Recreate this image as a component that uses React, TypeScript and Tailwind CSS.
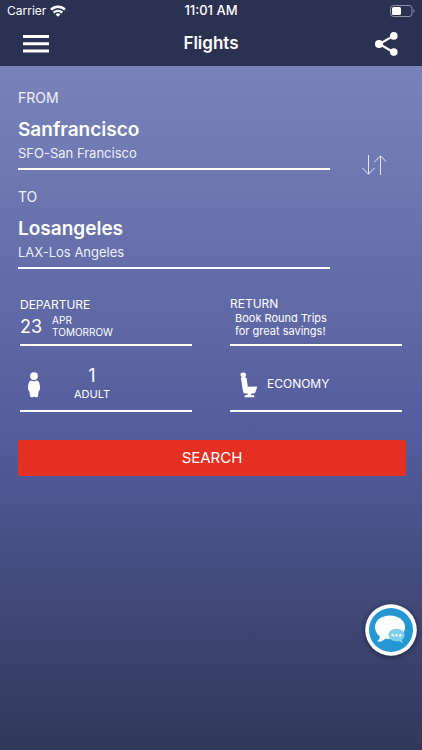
import type { ReactNode } from 'react'

interface AirportFieldProps {
  label: string
  city: string
  airport: string
}

function AirportField({ label, city, airport }: AirportFieldProps) {
  return (
    <button type="button" className="block w-full border-b-2 border-white pb-1.5 text-left">
      <span className="block text-sm leading-5 text-[#eef0fb]">{label}</span>
      <span className="mt-2 block text-[19px] leading-7 font-semibold">{city}</span>
      <span className="block text-[13px] leading-[18px] text-[#eef0fb]">{airport}</span>
    </button>
  )
}

interface OptionFieldProps {
  children: ReactNode
  className?: string
}

function OptionField({ children, className = '' }: OptionFieldProps) {
  return (
    <button type="button" className={`flex w-full border-b-2 border-white text-left ${className}`}>
      {children}
    </button>
  )
}

function StatusBar() {
  return (
    <div className="grid h-[22px] grid-cols-3 items-center px-[7px] text-xs">
      <div className="flex items-center gap-1">
        <span>Carrier</span>
        <svg className="h-3 w-4" viewBox="0 0 16 12" fill="none" stroke="currentColor" strokeWidth="2.4">
          <path d="M1 4.6a10 10 0 0 1 14 0" />
          <path d="M3.7 7.6a6.2 6.2 0 0 1 8.6 0" />
          <path d="M8 11.8 5.6 9.4a3.4 3.4 0 0 1 4.8 0z" fill="currentColor" stroke="none" />
        </svg>
      </div>
      <span className="text-center text-[13px] font-medium">11:01 AM</span>
      <svg className="h-3 w-[25px] justify-self-end" viewBox="0 0 25 12" fill="none">
        <rect x="0.5" y="0.5" width="21.5" height="11" rx="3" stroke="#8f93a8" />
        <rect x="2" y="2" width="9" height="8" rx="1.5" fill="white" />
        <path d="M23.5 4v4c1.4-.6 1.4-3.4 0-4z" fill="#8f93a8" />
      </svg>
    </div>
  )
}

function NavBar() {
  return (
    <div className="flex h-11 items-center justify-between px-[23px] pb-px">
      <button type="button" aria-label="Menu">
        <svg className="h-[18px] w-[26px]" viewBox="0 0 26 18" fill="currentColor">
          <path d="M0 0h26v3H0zM0 7.3h26v3H0zM0 14.6h26v3H0z" />
        </svg>
      </button>
      <h1 className="text-[17px] font-semibold">Flights</h1>
      <button type="button" aria-label="Share">
        <svg className="h-6 w-[26px]" viewBox="0 0 26 24" fill="currentColor">
          <path d="M20.8 3.6 6.5 12l14.3 8.5" fill="none" stroke="currentColor" strokeWidth="2.2" />
          <circle cx="6" cy="12" r="4" />
          <circle cx="20.8" cy="3.9" r="3.8" />
          <circle cx="20.8" cy="20.1" r="3.8" />
        </svg>
      </button>
    </div>
  )
}

function PersonIcon() {
  return (
    <svg className="h-[26px] w-3 shrink-0" viewBox="0 0 12 26" fill="currentColor">
      <circle cx="6" cy="4.1" r="3.9" />
      <path d="M3 8.6q3 1.4 6 0C11.2 9.2 12 12 12 16c-.1 1.8-.5 2.7-1.3 3.2l-.9 5.2q-.2.8-1 .8H6.9L6 24.2l-.9 1H3.2q-.8 0-1-.8l-.9-5.2C.5 18.7.1 17.8 0 16 0 12 .8 9.2 3 8.6z" />
    </svg>
  )
}

function SeatIcon() {
  return (
    <svg className="h-[26px] w-[17px] shrink-0" viewBox="0 0 17 26" fill="currentColor">
      <path d="M3.6.5C1.2.3.3 1.5.5 3c.1 1 .6 1.6 1.4 1.9h2.9c1-.4 1.3-1.2 1.2-2.3C5.9 1.3 4.9.6 3.6.5z" />
      <path d="M.9 5.7c1.9-1.1 4.9-.8 5.7.6l1.2 8.4 8.8-.1c.4.1.5.4.4.8l-1.5 4.7c-.3.9-.8 1.3-1.8 1.3H5.3c-1.4 0-2-.5-2.3-1.9z" />
      <path d="M7.7 20.8h3.4v2.1h2.2q1.2.4 1.2 2.3H4.4q0-1.900 1.200-2.300h2.100z" />
    </svg>
  )
}

function SwapIcon() {
  return (
    <svg className="h-5 w-6" viewBox="0 0 24 20" fill="none" stroke="#e3e6f7" strokeWidth="1">
      <path d="M6.5 0v19M.5 13l6 6.2 6-6.2" />
      <path d="M18.5 20V1M12.5 7l6-6.2 6 6.2" />
    </svg>
  )
}

function ChatButton() {
  return (
    <button
      type="button"
      aria-label="Chat"
      className="fixed right-[5px] bottom-[94px] size-[52px] rounded-full shadow-[0_1px_5px_rgba(20,15,30,0.6)]"
    >
      <svg className="size-full" viewBox="0 0 52 52">
        <circle cx="26" cy="26" r="25.8" fill="white" />
        <circle cx="26" cy="26" r="22" fill="#2598d3" />
        <path
          d="M25 11.5c8.5 0 15 5 15 11.7S33.5 35 25 35c-1.6 0-3-.1-4.5-.5-2 2.3-4.7 3.4-8.4 3 1.7-1.4 2.6-3.2 2.8-5.3C11.7 30 10 26.8 10 23.2 10 16.5 16.5 11.5 25 11.5z"
          fill="white"
        />
        <path
          d="M31.5 24.8c4.6 0 8.1 2.8 8.1 6.3 0 1.8-.9 3.5-2.5 4.6.1 1.2.6 2.2 1.5 3-2 .1-3.5-.5-4.6-1.7-.8.2-1.6.3-2.5.3-4.6 0-8.1-2.7-8.1-6.2s3.5-6.3 8.100-6.300z"
          fill="#7fd0ec"
        />
        <g fill="white">
          <circle cx="27.8" cy="31.2" r="1.2" />
          <circle cx="31.6" cy="31.2" r="1.2" />
          <circle cx="35.4" cy="31.2" r="1.2" />
        </g>
      </svg>
    </button>
  )
}

export default function App() {
  return (
    <div className="flex min-h-screen flex-col bg-[#2b3151] font-['Inter',sans-serif] text-white">
      <header>
        <StatusBar />
        <NavBar />
      </header>

      <main className="flex-1 bg-linear-to-b from-[#7983ba] via-[#525c9b] via-55% to-[#30385a] px-4 pt-[22px]">
        {/* Origin and destination */}
        <div className="flex items-center">
          <div className="flex flex-1 flex-col gap-[17px] pl-0.5">
            <AirportField label="FROM" city="Sanfrancisco" airport="SFO-San Francisco" />
            <AirportField label="TO" city="Losangeles" airport="LAX-Los Angeles" />
          </div>
          <div className="mb-[27px] flex w-[76px] justify-end pr-5">
            <button type="button" aria-label="Swap airports">
              <SwapIcon />
            </button>
          </div>
        </div>

        {/* Dates, passengers and cabin */}
        <div className="mt-[27px] grid grid-cols-2 gap-x-[38px] gap-y-5 pr-1 pl-1">
          <OptionField className="h-[50px] flex-col">
            <span className="text-xs leading-[18px]">DEPARTURE</span>
            <span className="flex items-center gap-2.5">
              <span className="text-lg leading-6">23</span>
              <span className="pb-0.5 text-[10px] leading-3">
                APR
                <br />
                TOMORROW
              </span>
            </span>
          </OptionField>
          <OptionField className="h-[50px] flex-col">
            <span className="text-xs leading-4">RETURN</span>
            <span className="pl-[5px] text-[11px] leading-[13px]">
              Book Round Trips
              <br />
              for great savings!
            </span>
          </OptionField>
          <OptionField className="h-[46px] gap-[34px] pl-2">
            <span className="pt-1.5">
              <PersonIcon />
            </span>
            <span className="flex flex-col items-center">
              <span className="text-lg leading-5">1</span>
              <span className="text-[11px] leading-4">ADULT</span>
            </span>
          </OptionField>
          <OptionField className="h-[46px] gap-2.5 pl-2.5">
            <span className="pt-1.5">
              <SeatIcon />
            </span>
            <span className="pt-2 text-xs leading-5">ECONOMY</span>
          </OptionField>
        </div>

        <button type="button" className="mt-7 ml-0.5 block h-9 w-[calc(100%-2px)] rounded-xs bg-[#e43023] text-[15px]">
          SEARCH
        </button>
      </main>

      <ChatButton />
    </div>
  )
}
